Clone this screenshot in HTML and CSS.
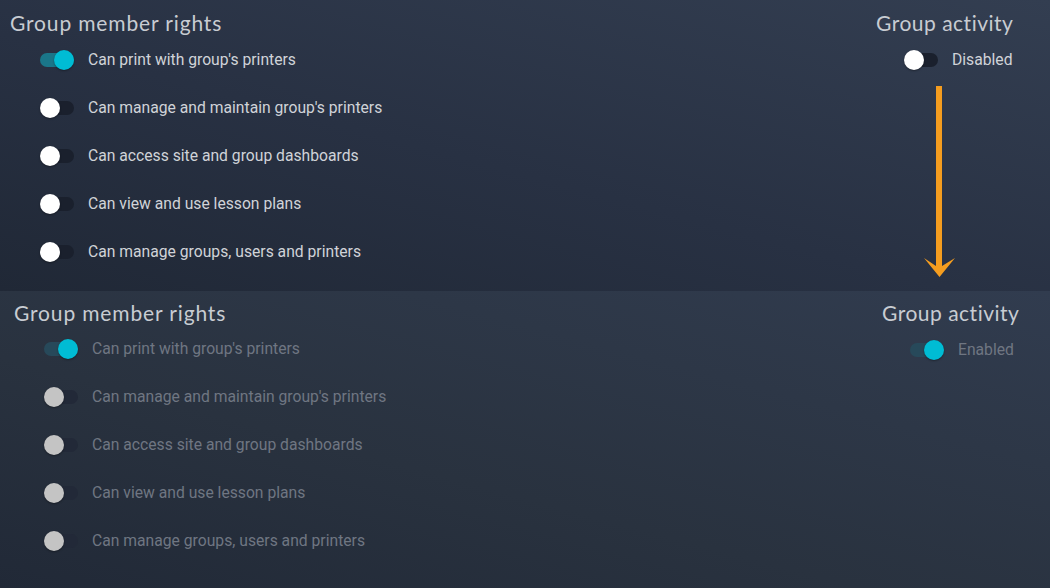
FILE: index.html
```html
<!DOCTYPE html>
<html lang="en">
<head>
<meta charset="utf-8">
<title>Group settings</title>
<link rel="stylesheet" href="styles.css">
</head>
<body>
<div class="page">
  <section class="panel panel-top">
    <div class="col-left">
      <h2 class="title">Group member rights</h2>
      <ul class="rights">
        <li class="row"><span class="switch on"><span class="knob"></span></span><span class="label">Can print with group's printers</span></li>
        <li class="row"><span class="switch"><span class="knob"></span></span><span class="label">Can manage and maintain group's printers</span></li>
        <li class="row"><span class="switch"><span class="knob"></span></span><span class="label">Can access site and group dashboards</span></li>
        <li class="row"><span class="switch"><span class="knob"></span></span><span class="label">Can view and use lesson plans</span></li>
        <li class="row"><span class="switch"><span class="knob"></span></span><span class="label">Can manage groups, users and printers</span></li>
      </ul>
    </div>
    <div class="col-right">
      <h2 class="title title-short">Group activity</h2>
      <div class="row activity"><span class="switch"><span class="knob"></span></span><span class="label">Disabled</span></div>
    </div>
  </section>

  <section class="panel panel-bottom disabled">
    <div class="col-left">
      <h2 class="title">Group member rights</h2>
      <ul class="rights">
        <li class="row"><span class="switch on"><span class="knob"></span></span><span class="label">Can print with group's printers</span></li>
        <li class="row"><span class="switch"><span class="knob"></span></span><span class="label">Can manage and maintain group's printers</span></li>
        <li class="row"><span class="switch"><span class="knob"></span></span><span class="label">Can access site and group dashboards</span></li>
        <li class="row"><span class="switch"><span class="knob"></span></span><span class="label">Can view and use lesson plans</span></li>
        <li class="row"><span class="switch"><span class="knob"></span></span><span class="label">Can manage groups, users and printers</span></li>
      </ul>
    </div>
    <div class="col-right">
      <h2 class="title title-short">Group activity</h2>
      <div class="row activity"><span class="switch on"><span class="knob"></span></span><span class="label">Enabled</span></div>
    </div>
  </section>

  <svg class="arrow" width="40" height="200" viewBox="0 0 40 200" aria-hidden="true">
    <path d="M16 6 H22 V186 L35 178 L19.5 197 L4 178 L16 186 Z" fill="#f59d1f"/>
  </svg>
</div>
</body>
</html>
```

FILE: styles.css
```css
* { box-sizing: border-box; }

html, body {
  margin: 0;
  padding: 0;
  width: 1050px;
  height: 588px;
  overflow: hidden;
  background: #232b3a;
}

.page {
  position: relative;
  width: 1050px;
  height: 588px;
  font-family: Roboto, "Liberation Sans", sans-serif;
}

.panel {
  display: flex;
  align-items: flex-start;
}

.panel-top {
  height: 291px;
  padding: 11px 34px 0 10px;
  background: linear-gradient(15deg, #202836 0%, #283143 45%, #333e51 100%);
}

.panel-bottom {
  height: 297px;
  padding: 10px 28px 0 14px;
  background: linear-gradient(15deg, #212937 0%, #29323f 40%, #313c4f 100%);
}

.panel-bottom .rights {
  margin-top: -1px;
}

.col-left {
  display: flex;
  flex-direction: column;
}

.col-right {
  margin-left: auto;
  width: 140px;
  display: flex;
  flex-direction: column;
}

.title {
  margin: 0;
  font-family: Lato, "Open Sans", sans-serif;
  font-weight: 400;
  font-size: 21px;
  line-height: 24px;
  letter-spacing: 0.85px;
  color: #c8ccd2;
  white-space: nowrap;
}

.title-short {
  letter-spacing: 0.5px;
}

.rights {
  list-style: none;
  margin: 0;
  padding: 0 0 0 30px;
}

.row {
  height: 48px;
  display: flex;
  align-items: center;
}

.activity {
  padding-left: 28px;
}

.switch {
  position: relative;
  flex: none;
  width: 34px;
  height: 14px;
  border-radius: 7px;
  background: #1a202d;
  margin-top: 1px;
}

.knob {
  position: absolute;
  top: -3px;
  left: 0;
  width: 20px;
  height: 20px;
  border-radius: 50%;
  background: #ffffff;
  box-shadow: 0 1px 2px rgba(0, 0, 0, 0.35);
}

.switch.on { background: #1a7689; }
.switch.on .knob { left: 14px; background: #00bcd4; }

.label {
  margin-left: 14px;
  font-size: 15.7px;
  line-height: 20px;
  padding-top: 1px;
  color: #d0d3d8;
  white-space: nowrap;
}

.disabled .label { color: #6f7682; }
.disabled .switch { background: #222938; }
.disabled .knob { background: #c4c4c4; }
.disabled .switch.on { background: #27495a; }
.disabled .switch.on .knob { background: #00bcd4; }

.arrow {
  position: absolute;
  left: 920px;
  top: 80px;
}
```
